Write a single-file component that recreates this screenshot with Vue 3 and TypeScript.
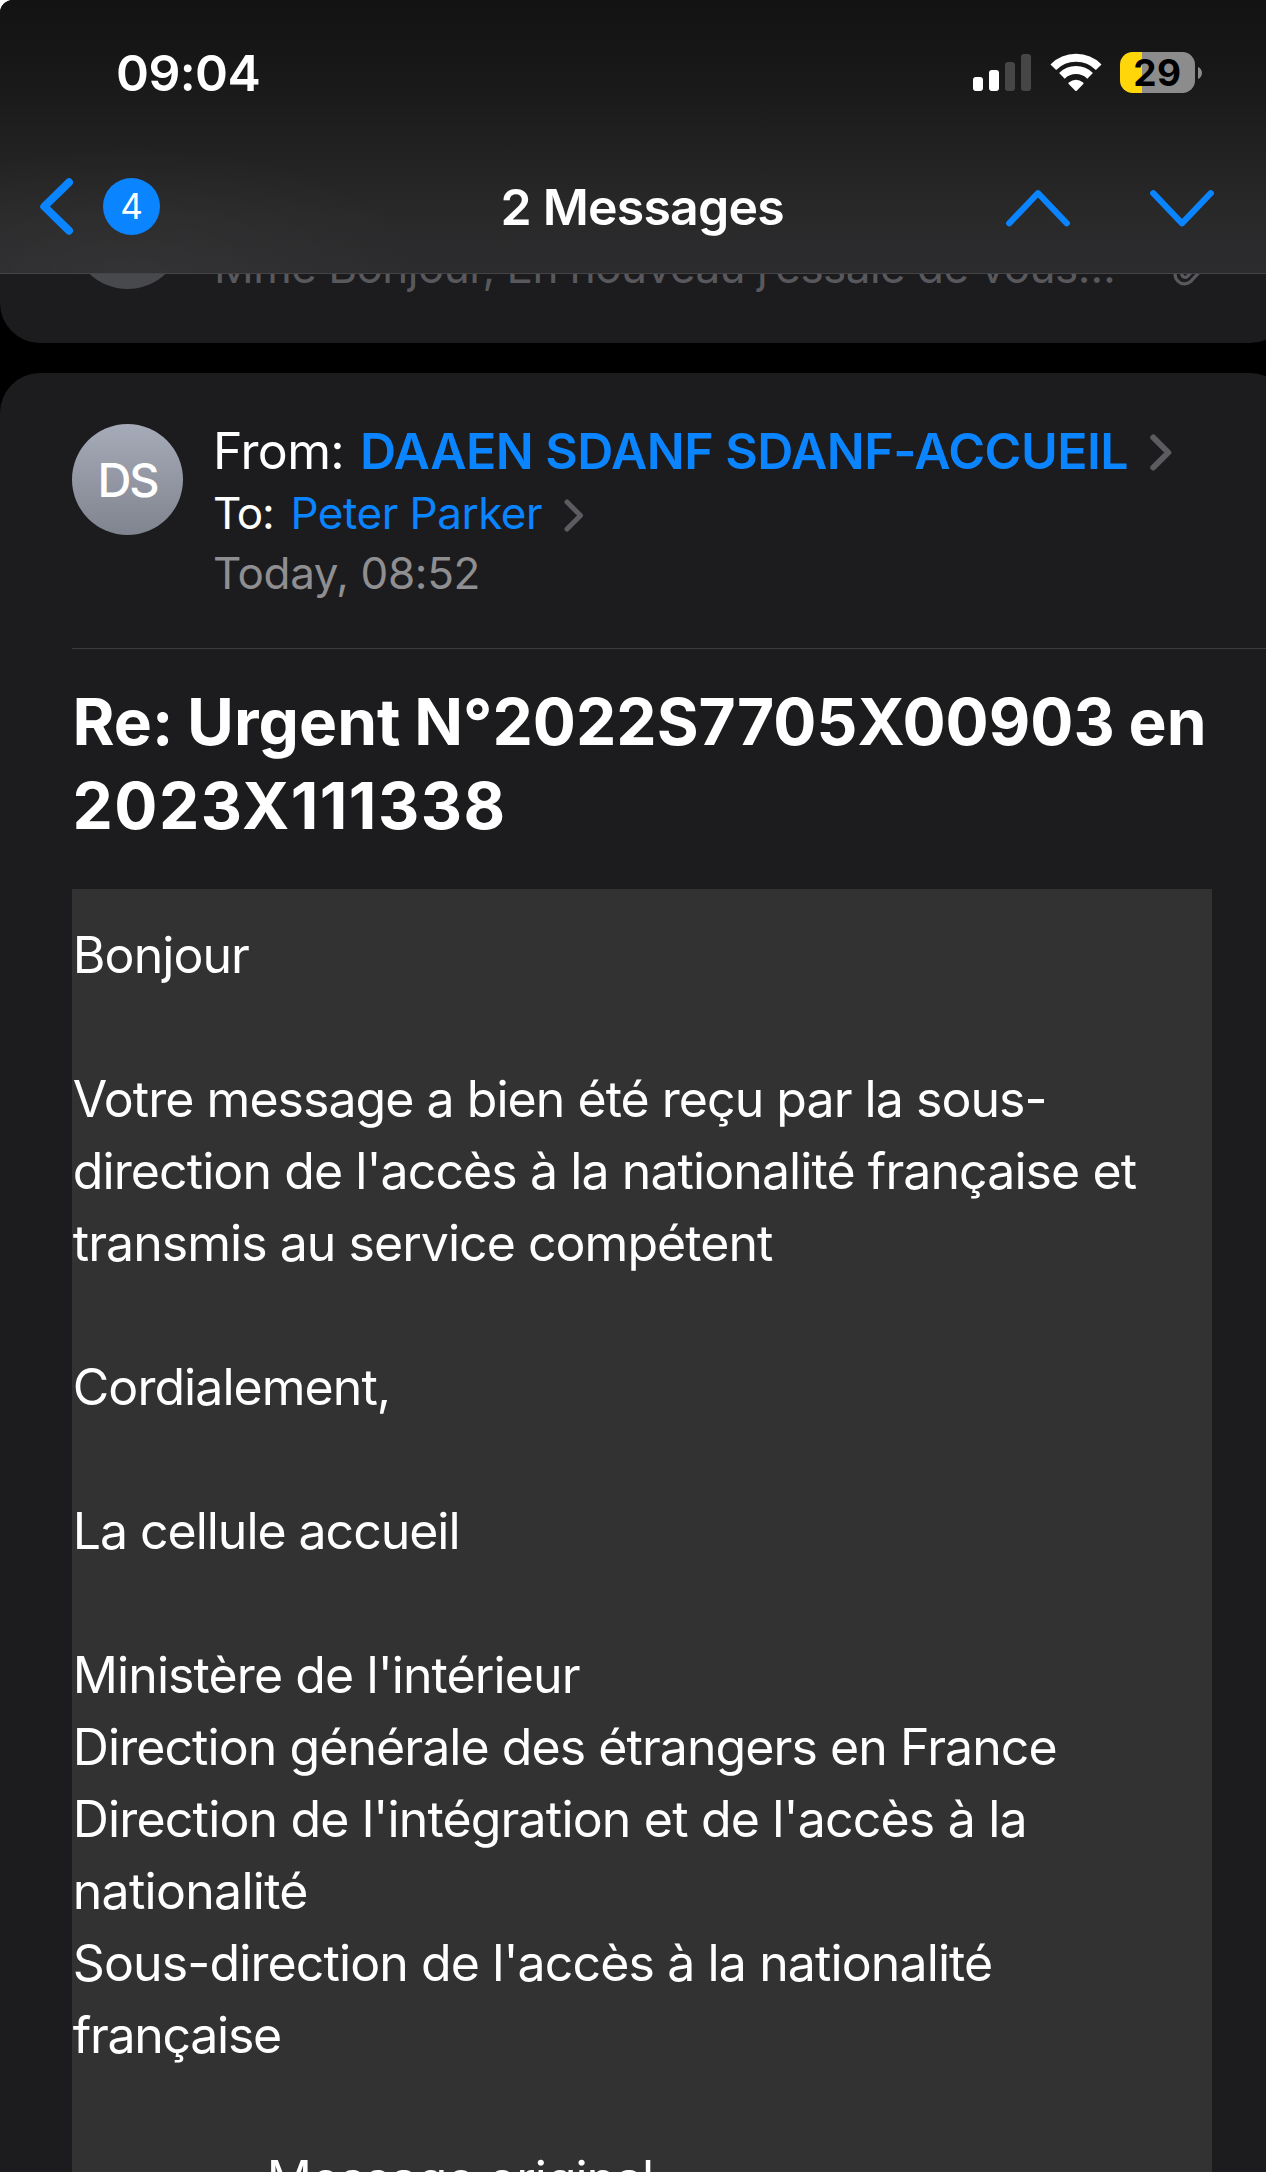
<script setup lang="ts">
interface Line {
  text: string
  tracking: number
  indent?: number
}

const subject: Line[] = [
  { text: 'Re: Urgent N°2022S7705X00903 en', tracking: 0.03 },
  { text: '2023X111338', tracking: 1.45 },
]

const body: Line[] = [
  { text: 'Bonjour', tracking: -0.93 },
  { text: '', tracking: 0 },
  { text: 'Votre message a bien été reçu par la sous-', tracking: -0.96 },
  { text: "direction de l'accès à la nationalité française et", tracking: -0.91 },
  { text: 'transmis au service compétent', tracking: -0.96 },
  { text: '', tracking: 0 },
  { text: 'Cordialement,', tracking: -0.95 },
  { text: '', tracking: 0 },
  { text: 'La cellule accueil', tracking: -1.04 },
  { text: '', tracking: 0 },
  { text: "Ministère de l'intérieur", tracking: -0.9 },
  { text: 'Direction générale des étrangers en France', tracking: -0.93 },
  { text: "Direction de l'intégration et de l'accès à la", tracking: -0.82 },
  { text: 'nationalité', tracking: -0.72 },
  { text: "Sous-direction de l'accès à la nationalité", tracking: -0.88 },
  { text: 'française', tracking: -1.3 },
  { text: '', tracking: 0 },
  { text: 'Message original', tracking: -1.06, indent: 194 },
]
</script>

<template>
  <div class="screen">
    <header class="top">
      <div class="status">
        <span class="time">09:04</span>
        <div class="indicators">
          <svg class="signal" width="48" height="38" viewBox="0 0 48 38">
            <rect x="0" y="23" width="10" height="14" rx="3" fill="#fff" />
            <rect x="16" y="16" width="10" height="21" rx="3" fill="#fff" />
            <rect x="32" y="8" width="10" height="29" rx="3" fill="#464646" />
            <rect x="48" y="0" width="10" height="37" rx="3" fill="#464646" />
          </svg>
          <svg class="wifi" width="52" height="38" viewBox="0 0 52 38">
            <path d="M3.3 13.2A32 32 0 0 1 48.7 13.2" fill="none" stroke="#fff" stroke-width="8" />
            <path d="M11.9 21.9A20 20 0 0 1 40.1 21.9" fill="none" stroke="#fff" stroke-width="8" />
            <path d="M26 36 19.4 29.2Q26 24.3 32.6 29.2Z" fill="#fff" stroke="#fff" stroke-width="2" stroke-linejoin="round" />
          </svg>
          <div class="battery"><span>29</span></div>
          <svg class="nub" width="4" height="12" viewBox="0 0 4 12">
            <path d="M0 0C5.3 2 5.3 10 0 12Z" fill="#8c8c8c" />
          </svg>
        </div>
      </div>
      <nav class="nav">
        <div class="back">
          <svg width="34" height="57" viewBox="0 0 34 57">
            <path d="M29 4.3 4.3 28.5 29 52.7" fill="none" stroke="#0a84ff" stroke-width="8" stroke-linecap="round" stroke-linejoin="round" />
          </svg>
          <span class="count">4</span>
        </div>
        <h1 class="title">2 Messages</h1>
        <div class="arrows">
          <svg width="64" height="37" viewBox="0 0 64 37">
            <path d="M3.2 33.3 32 3.2 60.8 33.3" fill="none" stroke="#0a84ff" stroke-width="6.2" stroke-linecap="round" stroke-linejoin="round" />
          </svg>
          <svg width="64" height="37" viewBox="0 0 64 37">
            <path d="M3.2 3.2 32 33.3 60.8 3.2" fill="none" stroke="#0a84ff" stroke-width="6.2" stroke-linecap="round" stroke-linejoin="round" />
          </svg>
        </div>
      </nav>
    </header>

    <article class="previous">
      <div class="ghost"></div>
      <p class="preview">Mme Bonjour, En nouveau j’essaie de vous…</p>
      <svg class="clip" width="40" height="50" viewBox="0 0 40 50">
        <path d="M34 28 20.6 42.6A9.4 9.4 0 0 1 7.3 29.4L24 12M26 28.5 17.4 37.4A3.4 3.4 0 0 1 12.6 32.6L24 21" fill="none" stroke="#59595d" stroke-width="3.3" stroke-linecap="round" />
      </svg>
    </article>

    <article class="message">
      <div class="head">
        <div class="avatar">DS</div>
        <div class="meta">
          <div class="from">
            <span class="label">From:</span>
            <span class="name">DAAEN SDANF SDANF-ACCUEIL</span>
            <svg width="22" height="37" viewBox="0 0 22 37">
              <path d="M3.3 3.5 18.3 18.5 3.3 33.5" fill="none" stroke="#5b5b60" stroke-width="6" stroke-linecap="round" stroke-linejoin="round" />
            </svg>
          </div>
          <div class="to">
            <span class="label">To:</span>
            <span class="name">Peter Parker</span>
            <svg width="20" height="33" viewBox="0 0 20 33">
              <path d="M3 3 16.5 16.5 3 30" fill="none" stroke="#5b5b60" stroke-width="5" stroke-linecap="round" stroke-linejoin="round" />
            </svg>
          </div>
          <div class="date">Today, 08:52</div>
        </div>
      </div>

      <h2 class="subject">
        <span v-for="line in subject" :key="line.text" :style="{ letterSpacing: line.tracking + 'px' }">{{ line.text }}</span>
      </h2>

      <div class="body">
        <p
          v-for="(line, i) in body"
          :key="i"
          :style="{ letterSpacing: line.tracking + 'px', paddingLeft: (line.indent ?? 0) + 'px' }"
        >{{ line.text }}</p>
      </div>
    </article>
  </div>
</template>

<style>
html,
body {
  background: #fff;
  overflow: hidden;
}
</style>

<style scoped>
.screen {
  width: 1266px;
  height: 2172px;
  overflow: hidden;
  border-top-left-radius: 13px;
  background: #000;
  color: #fff;
  font-family: Inter, "Liberation Sans", sans-serif;
  font-size: 50px;
  white-space: nowrap;
}

p,
h1,
h2 {
  margin: 0;
}

svg {
  display: block;
  flex: none;
  overflow: visible;
}

.top {
  box-sizing: border-box;
  height: 274px;
  border-bottom: 1px solid #444446;
  background:
    radial-gradient(ellipse 300px 130px at 130px 273px, rgba(255, 255, 255, 0.035), transparent),
    linear-gradient(#131313 0, #161616 50px, #1b1b1b 100px, #222223 155px, #29292a 215px, #2c2c2e 273px);
}

.status {
  display: flex;
  align-items: center;
  justify-content: space-between;
  height: 145px;
  padding: 0 64px 0 116px;
}

.time {
  font-weight: 600;
  letter-spacing: -0.6px;
}

.indicators {
  display: flex;
  align-items: center;
}

.signal {
  margin-right: 29px;
}

.wifi {
  margin-right: 18px;
}

.battery {
  width: 75px;
  height: 41px;
  border-radius: 12.5px;
  background: linear-gradient(90deg, #ffd60a 22px, #8c8c8c 22px);
  color: #000;
  font-size: 37px;
  font-weight: 700;
  line-height: 41px;
  letter-spacing: 0.39px;
  text-indent: 13.3px;
}

.nub {
  margin-left: 3px;
}

.nav {
  display: flex;
  align-items: center;
  height: 124px;
}

.back {
  display: flex;
  align-items: center;
  gap: 29px;
  width: 460.5px;
  padding: 0 0 2px 40px;
}

.count {
  width: 57px;
  height: 57px;
  border-radius: 50%;
  background: #0a84ff;
  font-size: 35px;
  font-weight: 400;
  line-height: 57px;
  text-align: center;
}

.title {
  width: 505.5px;
  font-size: 50px;
  font-weight: 600;
  letter-spacing: -0.8px;
}

.arrows {
  display: flex;
  gap: 80px;
  padding-top: 2px;
}

.previous {
  display: flex;
  align-items: flex-start;
  width: 1290px;
  height: 69px;
  overflow: hidden;
  border-radius: 0 0 40px 40px;
  background: #1c1c1e;
}

.ghost {
  flex: none;
  width: 111px;
  height: 111px;
  margin: -96px 31px 0 72px;
  border-radius: 50%;
  background: #48494d;
}

.preview {
  width: 956px;
  margin-top: -37px;
  color: #59595d;
  font-size: 44px;
  line-height: 60px;
  letter-spacing: -0.53px;
}

.clip {
  margin-top: -35px;
}

.message {
  width: 1290px;
  margin-top: 30px;
  border-radius: 40px 40px 0 0;
  background: #1c1c1e;
}

.head {
  display: flex;
  box-sizing: border-box;
  height: 276px;
  margin-left: 72px;
  padding-top: 47px;
  border-bottom: 1px solid #3b3b3d;
}

.avatar {
  width: 111px;
  height: 111px;
  margin: 4px 30px 0 0;
  border-radius: 50%;
  background: linear-gradient(#a6abb9, #80848e);
  font-size: 47px;
  font-weight: 500;
  line-height: 112px;
  letter-spacing: -2px;
  text-indent: 25.4px;
}

.from,
.to {
  display: flex;
  align-items: center;
}

.from {
  height: 61px;
}

.from .label {
  width: 146.9px;
  letter-spacing: -0.63px;
}

.from .name {
  width: 789.7px;
  font-weight: 600;
  letter-spacing: -0.5px;
}

.to,
.date {
  font-size: 44px;
}

.to {
  height: 64px;
}

.to .label {
  width: 77.5px;
  letter-spacing: -1.17px;
}

.to .name {
  width: 273px;
  letter-spacing: -0.5px;
}

.name {
  color: #0a84ff;
}

.from svg,
.to svg {
  margin-top: 4px;
}

.date {
  height: 57px;
  color: #8f8f92;
  line-height: 57px;
  letter-spacing: -0.37px;
}

.subject {
  display: flex;
  flex-direction: column;
  height: 168px;
  padding: 31px 0 41px 72.6px;
  font-size: 64px;
  font-weight: 700;
  line-height: 84px;
  word-spacing: -1.5px;
}

.body {
  width: 1140px;
  height: 1283px;
  margin-left: 72px;
  padding: 30px 0 0 0.8px;
  box-sizing: border-box;
  overflow: hidden;
  background: #323232;
}

.body p {
  height: 72px;
  line-height: 72px;
}
</style>
